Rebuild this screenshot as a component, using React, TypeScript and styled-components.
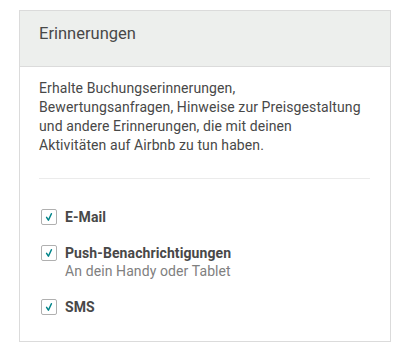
import styled, { createGlobalStyle } from 'styled-components';

const GlobalStyle = createGlobalStyle`
    html, body {
        margin: 0;
        padding: 0;
        background: #ffffff;
    }
    body {
        font-family: Roboto, "Liberation Sans", sans-serif;
        color: #484848;
    }
`;

const Page = styled.div`
    padding: 10px 0 0 19px;
`;

const Panel = styled.section`
    width: 372px;
    height: 332px;
    box-sizing: border-box;
    border: 1px solid #dbdbdb;
    display: flex;
    flex-direction: column;
`;

const PanelHeader = styled.header`
    height: 56px;
    box-sizing: border-box;
    background-color: #edefed;
    border-bottom: 1px solid #dbdbdb;
    padding: 13px 19px 0;
    font-size: 16.5px;
    line-height: 20px;
    color: #484848;
`;

const PanelBody = styled.div`
    padding: 12px 19px 0;
`;

const Intro = styled.p`
    margin: 0;
    font-size: 14px;
    letter-spacing: 0.1px;
    line-height: 19px;
    color: #484848;
`;

const Divider = styled.hr`
    border: 0;
    border-top: 1px solid #ebebeb;
    margin: 23px 1px 0 0;
`;

const OptionList = styled.div`
    display: flex;
    flex-direction: column;
    gap: 19px;
    padding-top: 30px;
    padding-left: 2px;
`;

const OptionRow = styled.label`
    display: flex;
    align-items: flex-start;
    gap: 8px;
`;

const Box = styled.span`
    width: 16px;
    height: 16px;
    box-sizing: border-box;
    border: 1px solid #b0b0b0;
    border-radius: 2px;
    display: flex;
    align-items: center;
    justify-content: center;
    flex: none;
`;

const OptionText = styled.div`
    display: flex;
    flex-direction: column;
`;

const OptionTitle = styled.span`
    font-size: 14px;
    font-weight: 700;
    letter-spacing: 0.1px;
    line-height: 17px;
    color: #484848;
`;

const OptionHint = styled.span`
    font-size: 14px;
    letter-spacing: 0.1px;
    line-height: 17px;
    margin-top: 1px;
    color: #808080;
`;

interface CheckOptionProps {
    title: string;
    hint?: string;
}

const Check = () => (
    <svg width="10" height="10" viewBox="0 0 10 10">
        <path d="M2.6 5.4 L4.4 8.2 L7.4 1.8" fill="none" stroke="#008489" strokeWidth="1.5" strokeLinecap="round" strokeLinejoin="round" />
    </svg>
);

const CheckOption = ({ title, hint }: CheckOptionProps) => (
    <OptionRow>
        <Box>
            <Check />
        </Box>
        <OptionText>
            <OptionTitle>{title}</OptionTitle>
            {hint && <OptionHint>{hint}</OptionHint>}
        </OptionText>
    </OptionRow>
);

export default function App() {
    return (
        <Page>
            <GlobalStyle />
            <Panel>
                <PanelHeader>Erinnerungen</PanelHeader>
                <PanelBody>
                    <Intro>
                        Erhalte Buchungserinnerungen,
                        <br />
                        Bewertungsanfragen, Hinweise zur Preisgestaltung
                        <br />
                        und andere Erinnerungen, die mit deinen
                        <br />
                        Aktivitäten auf Airbnb zu tun haben.
                    </Intro>
                    <Divider />
                    <OptionList>
                        <CheckOption title="E-Mail" />
                        <CheckOption title="Push-Benachrichtigungen" hint="An dein Handy oder Tablet" />
                        <CheckOption title="SMS" />
                    </OptionList>
                </PanelBody>
            </Panel>
        </Page>
    );
}
